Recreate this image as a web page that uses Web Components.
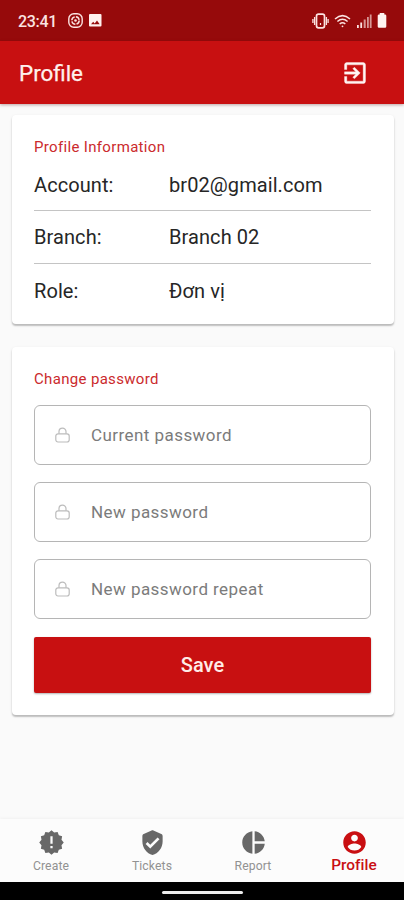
<!DOCTYPE html>
<html lang="vi">
<head>
<meta charset="utf-8">
<title>Profile</title>
<style>
html,body{margin:0;height:100%}
body{font-family:Roboto,"Noto Sans",sans-serif;background:#fafafa;overflow:hidden}
</style>
</head>
<body>
<profile-app></profile-app>
<script>
const define = (name, css, html) => customElements.define(name, class extends HTMLElement {
  constructor() {
    super();
    const t = document.createElement('template');
    t.innerHTML = `<style>*{box-sizing:border-box}svg{display:block}${css}</style>` +
      (typeof html === 'function' ? html(this) : html);
    this.attachShadow({ mode: 'open' }).append(t.content.cloneNode(true));
  }
});

// Scalloped badge outline: twelve shallow points around the centre
const star = Array.from({ length: 24 }, (_, i) => {
  const r = i % 2 ? 9.2 : 10.9, a = i * Math.PI / 12;
  return (12 + r * Math.sin(a)).toFixed(2) + ' ' + (12 - r * Math.cos(a)).toFixed(2);
}).join('L');

const icons = {
  create: `M${star}ZM13 17v-2h-2v2zM13 13V6.5h-2V13z`,
  tickets: 'M11.19 1.36l-7 3.11C3.47 4.79 3 5.51 3 6.3V11c0 5.55 3.84 10.74 9 12 5.16-1.26 9-6.45 9-12V6.3c0-.79-.47-1.51-1.19-1.83l-7-3.11c-.51-.23-1.11-.23-1.62 0zM10 17.4L5.9 13.3 7.6 11.6 10 14l6.5-6.5 1.7 1.7z',
  report: 'M11 2v20c-5.07-.5-9-4.79-9-10s3.93-9.5 9-10zm2.03 0v8.99H22c-.47-4.74-4.24-8.52-8.97-8.99zm0 11.01V22c4.74-.47 8.5-4.25 8.97-8.99h-8.97z',
  profile: 'M12 2C6.48 2 2 6.48 2 12s4.48 10 10 10 10-4.48 10-10S17.52 2 12 2zm0 3c1.66 0 3 1.34 3 3s-1.34 3-3 3-3-1.34-3-3 1.34-3 3-3zm0 14.2c-2.5 0-4.71-1.28-6-3.22.03-1.99 4-3.08 6-3.08 1.99 0 5.97 1.09 6 3.08-1.29 1.94-3.5 3.22-6 3.22z',
};

define('status-bar', `
:host{display:flex;align-items:center;height:41px;flex:none;padding:0 17px 0 18px;background:#960a0b;color:#fbe3e1}
span{font-size:16px;font-weight:500;letter-spacing:-.3px;width:50px;line-height:20px;padding-top:2px}
.l{flex:1;display:flex;gap:6px}.r{display:flex;align-items:center}`,
`<span>23:41</span>
<div class="l">
<svg width="15" height="15" viewBox="0 0 15 15" fill="none" stroke="currentColor"><rect x=".8" y=".8" width="13.4" height="13.4" rx="5" stroke-width="1.4"/><circle cx="7.5" cy="7.5" r="3.7" stroke-width="1.5" stroke-dasharray="4.6 1.2"/><circle cx="7.5" cy="7.5" r="1.3" fill="currentColor" stroke="none"/></svg>
<svg width="13" height="14" viewBox="0 0 13 14"><rect y="1" width="12.5" height="12.5" rx="1" fill="#fff0ee"/><path d="M2 11.2l2.2-2.4 1.5 1.6 2.3-2.8 2.7 3.6z" fill="#960a0b"/></svg>
</div>
<div class="r">
<svg width="17" height="16" viewBox="0 0 17 16" fill="none" stroke="currentColor"><rect x="4.5" y="1.2" width="8" height="13.6" rx="2" stroke-width="1.7"/><path d="M2.6 4v8M.9 6v4M14.4 4v8M16.1 6v4" stroke-width="1.3"/><path d="M8.5 10v2" stroke-width="1.2"/></svg>
<svg style="margin-left:5px" width="17" height="14" viewBox="0 0 17 14" fill="none" stroke="currentColor" stroke-width="1.5"><path d="M1 5Q8.5-1.8 16 5M3.4 7.5Q8.5 3 13.6 7.5M5.7 10Q8.5 7.5 11.3 10"/><circle cx="8.5" cy="12.3" r=".9" fill="currentColor" stroke="none"/></svg>
<svg style="margin-left:6px" width="15" height="14" viewBox="0 0 15 14" fill="currentColor"><path d="M0 11h1.8v3H0zM3.3 8.5h1.8V14H3.3z"/><path d="M6.7 5.5h2V14h-2zM10 3h1.8v11H10zM12.8.5h1.8V14h-1.8z" opacity=".65"/></svg>
<svg style="margin-left:5px" width="10" height="15" viewBox="0 0 10 15" fill="#fff3f1"><path d="M2.7 0h4.6v1.5H8q1.3 0 1.3 1.3v10.6Q9.3 14.7 8 14.7H2Q.7 14.7.7 13.4V2.8Q.7 1.5 2 1.5h.7z"/></svg>
</div>`);

define('app-bar', `
:host{display:flex;align-items:center;justify-content:space-between;height:62.5px;flex:none;padding:1px 35px 0 19px;background:#c81011;color:#fff0ed;box-shadow:0 1px 3px rgba(70,0,0,.35);position:relative}
h1{margin:0;font-size:22.4px;font-weight:400;-webkit-text-stroke:.25px currentColor;line-height:28px}`,
`<h1><slot></slot></h1><svg width="28" height="28" viewBox="0 0 24 24" fill="#fff5f3" stroke="#fff5f3" stroke-width=".3"><path d="M10.09 15.59L11.5 17l5-5-5-5-1.41 1.41L12.67 11H3v2h9.67l-2.58 2.59zM19 3H5c-1.11 0-2 .9-2 2v4h2V5h14v14H5v-4H3v4c0 1.1.89 2 2 2h14c1.1 0 2-.9 2-2V5c0-1.1-.9-2-2-2z"/></svg>`);

define('info-card', `
:host{display:block;background:#fff;border-radius:4px;padding:22px 22.5px 0;box-shadow:0 2px 1.5px rgba(0,0,0,.2),0 1px 3px rgba(0,0,0,.1)}
h2{margin:0;font-size:15px;font-weight:400;letter-spacing:.33px;line-height:20px;color:#cb2a2d}`,
`<h2><slot name="title"></slot></h2><slot></slot>`);

define('info-row', `
:host{display:grid;grid-template-columns:135px 1fr;align-items:center;height:53px;font-size:20px;letter-spacing:.08px;line-height:24px;color:#262626;border-bottom:1.5px solid #c4c4c4}
:host([first]){height:54px;padding-top:2px}
:host([last]){border:0}`,
`<slot name="label"></slot><slot></slot>`);

define('password-field', `
:host{display:flex;align-items:center;height:60px;margin-bottom:17.25px;border:1.3px solid #b5b5b5;border-radius:6px;padding-left:20px;font-size:17px;letter-spacing:.44px;color:#7b7b7b}
svg{margin-right:21px}`,
`<svg width="15" height="16" viewBox="0 0 15 16" fill="none" stroke="#bcbcbc" stroke-width="1.2"><rect x=".8" y="6.8" width="13.4" height="8.2" rx="2.2"/><path d="M4 6.8V4.6a3.5 3.5 0 0 1 7 0v2.2"/></svg><slot></slot>`);

define('save-button', `
:host{display:block;padding-top:.5px}
button{display:block;width:100%;height:56px;border:0;border-radius:2px;background:#c81011;color:#ffece8;font:500 20px Roboto,sans-serif;box-shadow:0 1px 2px rgba(0,0,0,.3)}`,
`<button><slot></slot></button>`);

define('nav-item', `
:host{flex:1;display:flex;flex-direction:column;align-items:center;padding:9.5px 0 0 1px;font-size:12.2px;letter-spacing:.1px;line-height:15px;color:#929292}
svg{fill:#686868;margin-bottom:3px}
:host([active]){font-size:15.4px;font-weight:500;letter-spacing:.05px;color:#c90f12}
:host([active]) svg{fill:#c90f12;margin-bottom:2.5px}`,
el => `<svg width="27" height="27" viewBox="0 0 24 24"><path fill-rule="evenodd" d="${icons[el.getAttribute('icon')]}"/></svg><slot></slot>`);

define('bottom-nav', `
:host{display:flex;height:63px;flex:none;background:#fcfcfc;box-shadow:0 -1px 3px rgba(0,0,0,.04)}`, `<slot></slot>`);

define('gesture-bar', `
:host{display:flex;justify-content:center;align-items:center;height:18px;flex:none;background:#000;padding-top:2px}
i{width:81px;height:3px;border-radius:2px;background:#ececec}`, `<i></i>`);

define('profile-app', `
:host{display:flex;flex-direction:column;width:100%;height:900px}
main{flex:1;padding:11.5px 10.5px 0 11.5px}
info-card+info-card{margin-top:23px}
.a{height:209px}.b{height:367.5px}
.fields{padding-top:15.7px}`,
`<status-bar></status-bar><app-bar>Profile</app-bar>
<main>
<info-card class="a"><span slot="title">Profile Information</span>
<info-row first><span slot="label">Account:</span>br02@gmail.com</info-row>
<info-row><span slot="label">Branch:</span>Branch 02</info-row>
<info-row last><span slot="label">Role:</span>Đơn vị</info-row></info-card>
<info-card class="b"><span slot="title">Change password</span>
<div class="fields"><password-field>Current password</password-field><password-field>New password</password-field><password-field>New password repeat</password-field><save-button>Save</save-button></div></info-card>
</main>
<bottom-nav><nav-item icon="create">Create</nav-item><nav-item icon="tickets">Tickets</nav-item><nav-item icon="report">Report</nav-item><nav-item icon="profile" active>Profile</nav-item></bottom-nav>
<gesture-bar></gesture-bar>`);
</script>
</body>
</html>
